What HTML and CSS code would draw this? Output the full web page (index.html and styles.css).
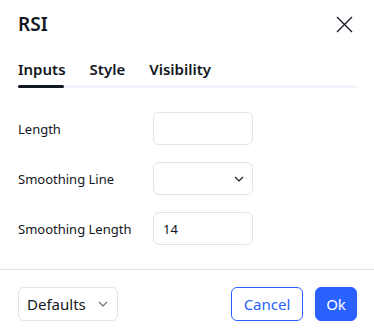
FILE: index.html
```html
<!DOCTYPE html>
<html>
<head>
<meta charset="utf-8">
<link rel="stylesheet" href="styles.css">
</head>
<body>
<div class="dialog">
  <div class="header">
    <div class="title">RSI</div>
    <button class="close" aria-label="Close">
      <svg width="17" height="17" viewBox="0 0 17 17"><path d="M1 1l15 15M16 1l-15 15" stroke="#131722" stroke-width="1.3" fill="none"/></svg>
    </button>
  </div>
  <div class="tabs">
    <div class="tab active">Inputs</div>
    <div class="tab">Style</div>
    <div class="tab">Visibility</div>
  </div>
  <div class="track"><div class="indicator"></div></div>
  <div class="form">
    <div class="row">
      <div class="label">Length</div>
      <div class="field"></div>
    </div>
    <div class="row">
      <div class="label">Smoothing Line</div>
      <div class="field select">
        <svg class="chev" width="10" height="6" viewBox="0 0 10 6"><path d="M1 1l4 4 4-4" stroke="#131722" stroke-width="1.2" fill="none"/></svg>
      </div>
    </div>
    <div class="row">
      <div class="label">Smoothing Length</div>
      <div class="field"><span class="value">14</span></div>
    </div>
  </div>
  <div class="footer">
    <div class="defaults">Defaults
      <svg class="chev" width="10" height="6" viewBox="0 0 10 6"><path d="M1 1l4 4 4-4" stroke="#6a6d78" stroke-width="1.2" fill="none"/></svg>
    </div>
    <div class="actions">
      <button class="btn cancel">Cancel</button>
      <button class="btn ok">Ok</button>
    </div>
  </div>
</div>
</body>
</html>
```
FILE: styles.css
```css
html, body {
  margin: 0;
  padding: 0;
  background: #fff;
}
body {
  font-family: "Noto Sans", "Open Sans", sans-serif;
  color: #131722;
}
.dialog {
  width: 374px;
  height: 332px;
  display: flex;
  flex-direction: column;
}
.header {
  display: flex;
  align-items: center;
  justify-content: space-between;
  padding: 12px 21px 0 18px;
  height: 24px;
}
.title {
  font-size: 19px;
  font-weight: 600;
  line-height: 24px;
}
.close {
  border: 0;
  background: none;
  padding: 0;
  width: 17px;
  height: 17px;
  display: flex;
}
.tabs {
  display: flex;
  gap: 24px;
  padding: 23px 18px 0 18px;
}
.tab {
  font-size: 15px;
  font-weight: 600;
  line-height: 20px;
}
.track {
  margin: 6px 17px 0 18px;
  height: 3px;
  background: #f0f3fa;
  border-radius: 2px;
}
.indicator {
  width: 46px;
  height: 3px;
  background: #131722;
  border-radius: 2px;
}
.form {
  display: flex;
  flex-direction: column;
  gap: 17px;
  padding: 24px 18px 0 18px;
}
.row {
  display: flex;
  align-items: center;
  height: 33px;
}
.label {
  width: 135px;
  font-size: 13px;
  line-height: 18px;
}
.field {
  width: 98px;
  height: 31px;
  border: 1px solid #e0e3eb;
  border-radius: 6px;
  display: flex;
  align-items: center;
  padding: 0;
  box-sizing: content-box;
}
.field .value {
  font-size: 13px;
  padding-left: 9px;
}
.select {
  justify-content: flex-end;
}
.select .chev {
  margin-right: 8px;
}
.footer {
  margin-top: 24px;
  border-top: 1px solid #e0e3eb;
  display: flex;
  justify-content: space-between;
  align-items: center;
  padding: 17px 17px 0 18px;
}
.defaults {
  border: 1px solid #e0e3eb;
  border-radius: 6px;
  display: flex;
  align-items: center;
  justify-content: space-between;
  padding: 0 9px 0 8px;
  box-sizing: border-box;
  width: 100px;
  height: 34px;
  font-size: 15px;
}
.actions {
  display: flex;
  gap: 12px;
}
.btn {
  font-family: inherit;
  font-size: 15px;
  height: 34px;
  border-radius: 6px;
  padding: 0;
  box-sizing: border-box;
}
.cancel {
  width: 72px;
  background: #fff;
  border: 1px solid #2962ff;
  color: #2962ff;
}
.ok {
  width: 42px;
  background: #2962ff;
  border: 1px solid #2962ff;
  color: #fff;
}
```
